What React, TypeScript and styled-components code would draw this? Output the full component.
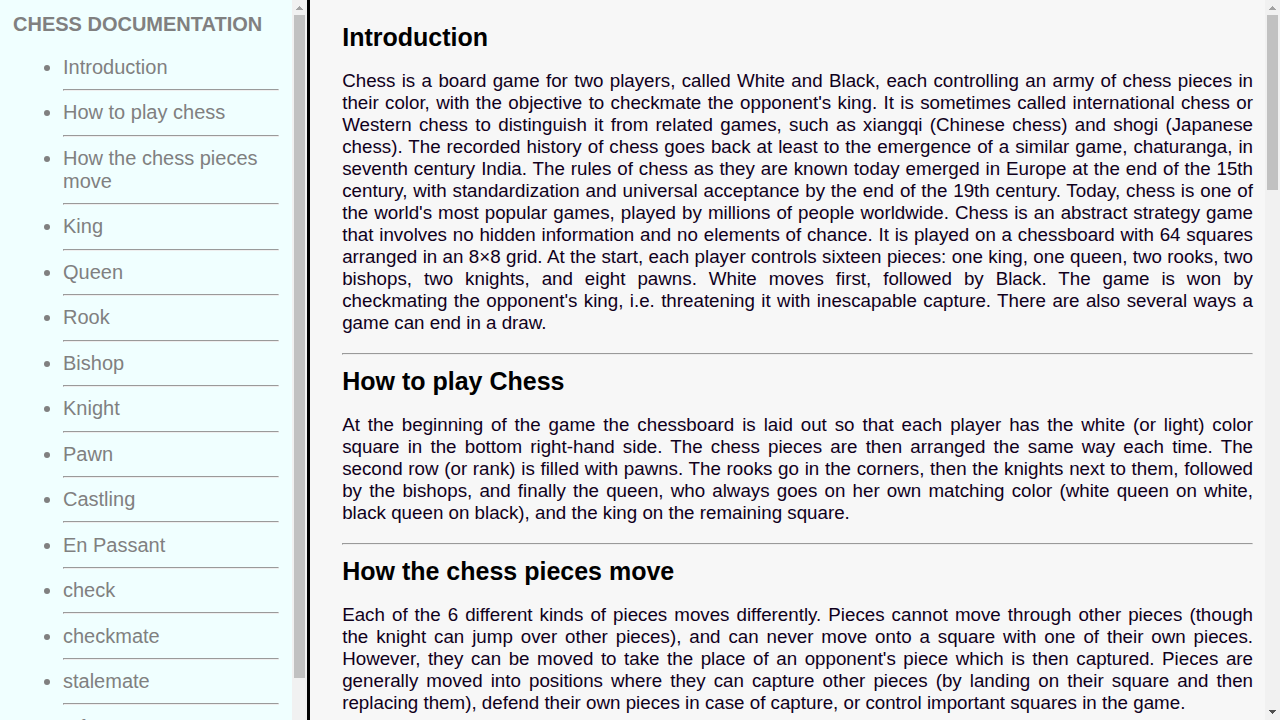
import React from "react";
import styled, { createGlobalStyle } from "styled-components";

const GlobalStyle = createGlobalStyle`
  body {
    margin: 0;
    background: #f7f7f7;
    font-family: "Liberation Sans", Arial, sans-serif;
  }
`;

const Page = styled.div`
  display: flex;
  height: 100vh;
  overflow: hidden;
`;

const SidebarPane = styled.div`
  display: flex;
  flex: none;
  width: 24vw;
  border-right: 3px solid #000;
`;

const MainPane = styled.div`
  display: flex;
  flex: 1;
  min-width: 0;
`;

const Sidebar = styled.nav`
  flex: 1;
  min-width: 0;
  box-sizing: border-box;
  padding: 13px;
  overflow-y: auto;
  scrollbar-width: none;
  background: #f0ffff;
  color: gray;
  font-size: 20px;
`;

const SiteTitle = styled.header`
  font-weight: bold;
  white-space: nowrap;
`;

const TopicList = styled.ul`
  margin: 20px 0;
  padding-left: 50px;
`;

const Topic = styled.li`
  list-style: disc;
`;

const TopicLink = styled.a`
  color: inherit;
  text-decoration: none;
`;

const TopicRule = styled.hr`
  margin: 0.8vw 0;
`;

const Main = styled.main`
  flex: 1;
  min-width: 0;
  box-sizing: border-box;
  padding: 11px 12px 12px 32px;
  overflow-y: auto;
  scrollbar-width: none;
  background: #f7f7f7;
`;

const Section = styled.section`
  color: #000;
  font-size: 25px;
`;

const SectionTitle = styled.header`
  padding-top: 12px;
  font-weight: bold;
`;

const Paragraph = styled.p`
  margin: 18px 0 19px;
  color: #10001c;
  font-size: 0.75em;
  text-align: justify;
`;

const SectionRule = styled.hr`
  margin: 0;
`;

const Bar = styled.div`
  display: flex;
  flex: none;
  flex-direction: column;
  width: 15px;
  background: #f1f1f1;
`;

const BarArrow = styled.svg`
  display: block;
  flex: none;
  width: 15px;
  height: 15px;
`;

const BarTrack = styled.div`
  flex: 1;
  padding: 0 2px;
`;

const BarThumb = styled.div<{ $share: number }>`
  height: ${(p) => p.$share}%;
  background: #c1c1c1;
`;

function ScrollBar({ share, hasEnd = false }: { share: number; hasEnd?: boolean }) {
  return (
    <Bar aria-hidden="true">
      <BarArrow viewBox="0 0 15 15" shapeRendering="crispEdges">
        <path d="M4 10h7v-1h-1v-1h-1v-1h-1v-1h-1v1h-1v1h-1v1h-1z" fill="#a3a3a3" />
      </BarArrow>
      <BarTrack>
        <BarThumb $share={share} />
      </BarTrack>
      {hasEnd && (
        <BarArrow viewBox="0 0 15 15" shapeRendering="crispEdges">
          <path d="M4 5h7v1h-1v1h-1v1h-1v1h-1v-1h-1v-1h-1v-1h-1z" fill="#505050" />
        </BarArrow>
      )}
    </Bar>
  );
}

const topics = [
  "Introduction", "How to play chess", "How the chess pieces move", "King", "Queen", "Rook",
  "Bishop", "Knight", "Pawn", "Castling", "En Passant", "check", "checkmate", "stalemate", "Info",
];

const slug = (s: string) => s.toLowerCase().replace(/ /g, "-");

const sections = [
  {
    title: "Introduction",
    text: "Chess is a board game for two players, called White and Black, each controlling an army of chess pieces in their color, with the objective to checkmate the opponent's king. It is sometimes called international chess or Western chess to distinguish it from related games, such as xiangqi (Chinese chess) and shogi (Japanese chess). The recorded history of chess goes back at least to the emergence of a similar game, chaturanga, in seventh century India. The rules of chess as they are known today emerged in Europe at the end of the 15th century, with standardization and universal acceptance by the end of the 19th century. Today, chess is one of the world's most popular games, played by millions of people worldwide. Chess is an abstract strategy game that involves no hidden information and no elements of chance. It is played on a chessboard with 64 squares arranged in an 8×8 grid. At the start, each player controls sixteen pieces: one king, one queen, two rooks, two bishops, two knights, and eight pawns. White moves first, followed by Black. The game is won by checkmating the opponent's king, i.e. threatening it with inescapable capture. There are also several ways a game can end in a draw.",
  },
  {
    title: "How to play Chess",
    text: "At the beginning of the game the chessboard is laid out so that each player has the white (or light) color square in the bottom right-hand side. The chess pieces are then arranged the same way each time. The second row (or rank) is filled with pawns. The rooks go in the corners, then the knights next to them, followed by the bishops, and finally the queen, who always goes on her own matching color (white queen on white, black queen on black), and the king on the remaining square.",
  },
  {
    title: "How the chess pieces move",
    text: "Each of the 6 different kinds of pieces moves differently. Pieces cannot move through other pieces (though the knight can jump over other pieces), and can never move onto a square with one of their own pieces. However, they can be moved to take the place of an opponent's piece which is then captured. Pieces are generally moved into positions where they can capture other pieces (by landing on their square and then replacing them), defend their own pieces in case of capture, or control important squares in the game.",
  },
];

export default function App() {
  return (
    <Page>
      <GlobalStyle />
      <SidebarPane>
        <Sidebar>
          <SiteTitle>CHESS DOCUMENTATION</SiteTitle>
          <TopicList>
            {topics.map((t) => (
              <Topic key={t}>
                <TopicLink href={`#${slug(t)}`}>{t}</TopicLink>
                <TopicRule />
              </Topic>
            ))}
          </TopicList>
        </Sidebar>
        <ScrollBar share={94} />
      </SidebarPane>
      <MainPane>
        <Main>
          {sections.map((s) => (
            <Section key={s.title} id={slug(s.title)}>
              <SectionTitle>{s.title}</SectionTitle>
              <Paragraph>{s.text}</Paragraph>
              <SectionRule />
            </Section>
          ))}
        </Main>
        <ScrollBar share={25.4} hasEnd />
      </MainPane>
    </Page>
  );
}
